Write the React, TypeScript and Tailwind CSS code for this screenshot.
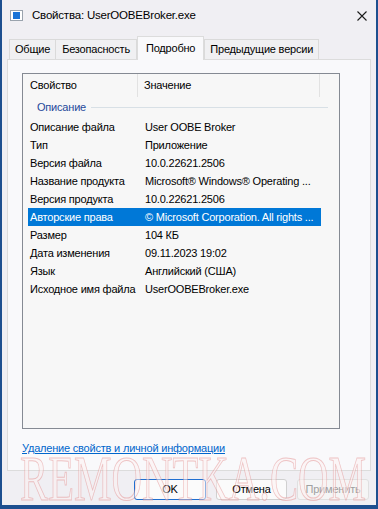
import React from 'react';

const rows: [string, string][] = [
  ['Описание файла', 'User OOBE Broker'],
  ['Тип', 'Приложение'],
  ['Версия файла', '10.0.22621.2506'],
  ['Название продукта', 'Microsoft® Windows® Operating ...'],
  ['Версия продукта', '10.0.22621.2506'],
  ['Авторские права', '© Microsoft Corporation. All rights ...'],
  ['Размер', '104 КБ'],
  ['Дата изменения', '09.11.2023 19:02'],
  ['Язык', 'Английский (США)'],
  ['Исходное имя файла', 'UserOOBEBroker.exe'],
];

const tabs = ['Общие', 'Безопасность', 'Подробно', 'Предыдущие версии'];

export default function App() {
  return (
    <div className="w-[378px] h-[509px] bg-[#1d4f8f] overflow-hidden relative font-['Liberation_Sans',Arial,sans-serif] text-[11px] tracking-[-0.2px] text-black">
      <div className="mx-[2px] h-[505px] bg-[#f0eff3] flex flex-col">
        {/* title bar */}
        <div className="h-[31px] flex items-center pl-[8px] pr-[6px]">
          <div className="w-[13px] h-[11px] bg-white border border-[#9aa3ad] flex items-center justify-center">
            <div className="w-[7px] h-[7px] bg-[#1a73d6]" />
          </div>
          <span className="ml-[9px] text-[11.5px]">Свойства: UserOOBEBroker.exe</span>
          <svg className="ml-auto mr-[3px] w-[10px] h-[10px]" viewBox="0 0 10 10" fill="none" stroke="#1b1b1b" strokeWidth="1.1">
            <path d="M0.5 0.5l9 9M9.5 0.5l-9 9" />
          </svg>
        </div>

        {/* tabs */}
        <div className="flex items-end h-[28px] pl-[7px]">
          {tabs.map((t, i) =>
            i === 2 ? (
              <div
                key={t}
                className="h-[24px] -mb-px px-[8px] flex items-center bg-[#f9f9fb] border border-b-0 border-[#dcdcdc] relative z-10"
              >
                {t}
              </div>
            ) : (
              <div
                key={t}
                className={`h-[20px] px-[5px] flex items-center bg-[#f0f0f2] border border-b-0 border-[#dadada] ${i === 1 ? 'border-l-0 px-[6px]' : ''}`}
              >
                {t}
              </div>
            )
          )}
        </div>

        {/* panel */}
        <div className="mx-[5px] h-[412px] bg-[#f9f9fb] border border-[#dcdcdc] flex flex-col pl-[14px] pt-[13px]">
          <div className="w-[318px] h-[356px] bg-[#f7f7f7] border border-[#858a93] flex flex-col">
            <div className="h-[23px] flex items-stretch">
              <div className="w-[115px] pl-[7px] flex items-center border-r border-[#e2e2e2]">Свойство</div>
              <div className="w-[182px] pl-[6px] flex items-center border-r border-[#e2e2e2]">Значение</div>
            </div>
            <div className="h-[21px] flex items-center pl-[14px] pr-[11px]">
              <span className="text-[#26499b]">Описание</span>
              <div className="flex-1 ml-[5px] h-px bg-[#d8e0e6]" />
            </div>
            {rows.map(([k, v]) => {
              const sel = k === 'Авторские права';
              return (
                <div
                  key={k}
                  className={`h-[18px] ml-[5px] w-[293px] flex items-center ${sel ? 'bg-[#0078d7] text-white' : ''}`}
                >
                  <span className="w-[117px] shrink-0 pl-[2px] whitespace-nowrap">{k}</span>
                  <span className="whitespace-nowrap">{v}</span>
                </div>
              );
            })}
          </div>
          <div className="mt-[11px] text-[#0066cc] underline">Удаление свойств и личной информации</div>
        </div>

        {/* buttons */}
        <div className="flex justify-end gap-[10px] pr-[7px] mt-[8px]">
          <button className="w-[72px] h-[21px] rounded-[3px] bg-[#fbfbfb] border border-[#1f6fd1] flex items-center justify-center">
            OK
          </button>
          <button className="w-[71px] h-[21px] rounded-[3px] bg-[#fbfbfb] border border-[#d0d0d0] flex items-center justify-center">
            Отмена
          </button>
          <button className="w-[72px] h-[21px] rounded-[3px] bg-[#f5f5f5] border border-[#e0e0e0] text-[#a0a0a0] flex items-center justify-center">
            Применить
          </button>
        </div>
      </div>

      {/* watermark */}
      <div className="absolute left-[20px] top-[447px] origin-left scale-x-[0.66] pointer-events-none font-['Liberation_Serif',serif] text-[64px] leading-none tracking-normal text-[#fdf2f2] opacity-50 [-webkit-text-stroke:1px_#e58f8f] whitespace-nowrap">
        REMONTKA.COM
      </div>
    </div>
  );
}
